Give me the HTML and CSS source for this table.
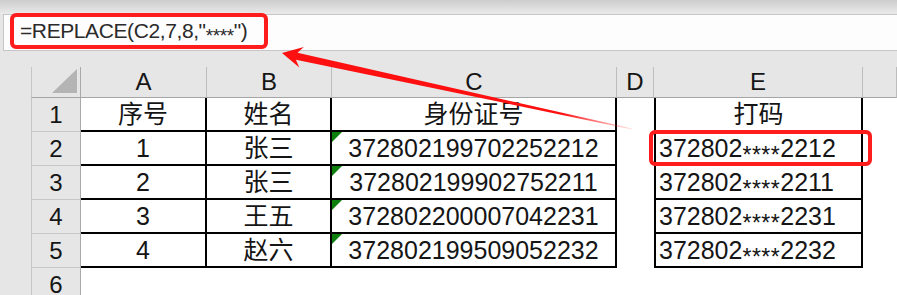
FILE: index.html
```html
<!DOCTYPE html>
<html>
<head>
<title>REPLACE</title>
<link rel="stylesheet" href="styles.css">
</head>
<body>

<div class='topbar'></div>

<div class='fbar'>
    <div class='fx'><span>=REPLACE(C2,7,8,"<span class='ast'>****</span>")</span></div>
</div>

<div class='sheet'>
    <!-- column headers -->
    <div class='corner'><div class='tri'></div></div>
    <div class='ch'>A</div>
    <div class='ch'>B</div>
    <div class='ch'>C</div>
    <div class='ch'>D</div>
    <div class='ch'>E</div>
    <div class='ch'></div>

    <div class='rh'>1</div>
    <div class='c b'>序号</div>
    <div class='c b'>姓名</div>
    <div class='c b'>身份证号</div>
    <div class='c'></div>
    <div class='c e mid'>打码</div>
    <div class='c'></div>

    <div class='rh'>2</div>
    <div class='c b'>1</div>
    <div class='c b'>张三</div>
    <div class='c b txt'>372802199702252212</div>
    <div class='c'></div>
    <div class='c e'><span>372802<span class='ast'>****</span>2212</span><div class='mark'></div></div>
    <div class='c'></div>

    <div class='rh'>3</div>
    <div class='c b'>2</div>
    <div class='c b'>张三</div>
    <div class='c b txt'>372802199902752211</div>
    <div class='c'></div>
    <div class='c e'><span>372802<span class='ast'>****</span>2211</span></div>
    <div class='c'></div>

    <div class='rh'>4</div>
    <div class='c b'>3</div>
    <div class='c b'>王五</div>
    <div class='c b txt'>372802200007042231</div>
    <div class='c'></div>
    <div class='c e'><span>372802<span class='ast'>****</span>2231</span></div>
    <div class='c'></div>

    <div class='rh'>5</div>
    <div class='c b'>4</div>
    <div class='c b'>赵六</div>
    <div class='c b txt'>372802199509052232</div>
    <div class='c'></div>
    <div class='c e'><span>372802<span class='ast'>****</span>2232</span></div>
    <div class='c'></div>

    <div class='rh'>6</div>
    <div class='c'></div>
    <div class='c'></div>
    <div class='c'></div>
    <div class='c'></div>
    <div class='c'></div>
    <div class='c'></div>
</div>

<!-- arrow from the result cell back to the formula -->
<svg class='arrow' width='897' height='295' viewBox='0 0 897 295'>
    <defs>
        <linearGradient id='fade' gradientUnits='userSpaceOnUse' x1='282' y1='53' x2='632' y2='129'>
            <stop offset='0' stop-color='#ff1010'/>
            <stop offset='0.8' stop-color='#ff1010'/>
            <stop offset='1' stop-color='#ff1010' stop-opacity='0.1'/>
        </linearGradient>
    </defs>
    <polygon fill='url(#fade)'
        points='282,53 303.8,46.9 297.5,52.7 632.1,128.6 631.9,129.4 295.9,59.7 299.3,67.6'/>
</svg>

</body>
</html>
```

FILE: styles.css
```css
html, body {
    margin: 0px;
    height: 100%;
}

body {
    position: relative;
    overflow: hidden;
    background: #e6e6e6;
    font-family: "Liberation Sans", "Noto Sans CJK SC", sans-serif;
    color: #151515;
}

.topbar {
    height: 14px;
    background: linear-gradient(#cdcdcd, #eaeaea);
}

/* formula bar */
.fbar {
    display: flex;
    height: 35px;
    margin-left: 3px;
    background: #fdfdfd;
    border-top: 1px solid #c6c6c6;
    border-bottom: 1px solid #c6c6c6;
    border-left: 1px solid #c6c6c6;
}

.fx {
    box-sizing: border-box;
    display: flex;
    align-items: center;
    width: 258px;
    height: 36px;
    margin: -2px 0px 0px 6px;
    padding-left: 6px;
    border: 4px solid #ff1c1c;
    border-radius: 6px;
    font-size: 21px;
    letter-spacing: -0.4px;
    color: #2a2a2a;
    white-space: nowrap;
}

.fx .ast {
    font-size: 19px;
    line-height: 0;
    vertical-align: -0.2em;
}

/* grid */
.sheet {
    display: grid;
    grid-template-columns: 50px 126px 125px 285px 37px 209px 1fr;
    grid-template-rows: 31px repeat(6, 34px);
    padding: 16px 0px 0px 31px;
}

.sheet > div {
    box-sizing: border-box;
    white-space: nowrap;
}

.corner {
    display: flex;
    justify-content: flex-end;
    align-items: flex-end;
    padding: 0px 3px 4px 0px;
    border-left: 1px solid #c6c6c6;
    border-right: 1px solid #a9a9a9;
    border-bottom: 1px solid #a5a5a5;
}

.tri {
    width: 25px;
    height: 24px;
    background: #b4b4b4;
    clip-path: polygon(100% 0, 100% 100%, 0 100%);
}

.ch {
    display: flex;
    align-items: center;
    justify-content: center;
    font-size: 24px;
    border-right: 1px solid #bdbdbd;
    border-bottom: 1px solid #a5a5a5;
}

.rh {
    display: flex;
    align-items: center;
    justify-content: center;
    font-size: 24px;
    border-left: 1px solid #c6c6c6;
    border-right: 1px solid #a9a9a9;
    border-bottom: 1px solid #c6c6c6;
}

.c {
    position: relative;
    display: flex;
    align-items: center;
    justify-content: center;
    background: #fff;
    font-size: 25px;
    line-height: 30px;
}

.b {
    border-right: 2px solid #000;
    border-bottom: 2px solid #000;
}

.e {
    justify-content: flex-start;
    padding-left: 3px;
    border-left: 2px solid #000;
    border-right: 2px solid #000;
    border-bottom: 2px solid #000;
}

.e.mid {
    justify-content: center;
    padding-left: 0px;
}

.c .ast {
    font-size: 23px;
    line-height: 0;
    letter-spacing: 0.5px;
    vertical-align: -0.28em;
}

/* number-stored-as-text flag */
.txt::before {
    content: '';
    position: absolute;
    top: 0px;
    left: 0px;
    width: 10px;
    height: 10px;
    background: #0d7f0d;
    clip-path: polygon(0 0, 100% 0, 0 100%);
}

/* red highlight around E2 */
.mark {
    position: absolute;
    z-index: 2;
    top: -2px;
    left: -7px;
    right: -11px;
    bottom: -2px;
    border: 4px solid #ff1c1c;
    border-radius: 6px;
}

.arrow {
    position: absolute;
    z-index: 3;
    top: 0px;
    left: 0px;
    pointer-events: none;
}
```
